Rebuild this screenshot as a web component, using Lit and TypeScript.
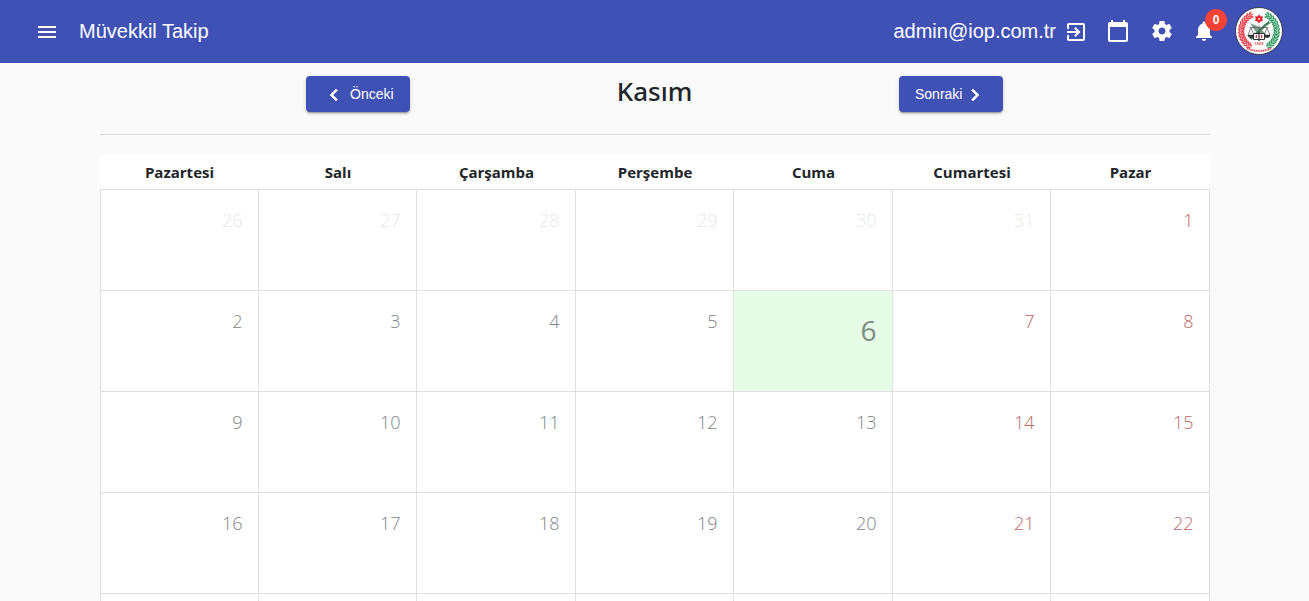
import { LitElement, html, css, svg } from "lit";
import { customElement } from "lit/decorators.js";
import { classMap } from "lit/directives/class-map.js";

const ICONS = {
  menu: "M3 18h18v-2H3v2zm0-5h18v-2H3v2zm0-7v2h18V6H3z",
  exit: "M10.09 15.59L11.5 17l5-5-5-5-1.41 1.41L12.67 11H3v2h9.67l-2.58 2.59zM19 3H5c-1.11 0-2 .9-2 2v4h2V5h14v14H5v-4H3v4c0 1.1.89 2 2 2h14c1.1 0 2-.9 2-2V5c0-1.1-.9-2-2-2z",
  calendar: "M20 3h-1V1h-2v2H7V1H5v2H4c-1.1 0-2 .9-2 2v16c0 1.1.9 2 2 2h16c1.1 0 2-.9 2-2V5c0-1.1-.9-2-2-2zm0 18H4V8h16v13z",
  settings: "M19.43 12.98c.04-.32.07-.64.07-.98s-.03-.66-.07-.98l2.11-1.65c.19-.15.24-.42.12-.64l-2-3.46c-.12-.22-.39-.3-.61-.22l-2.49 1c-.52-.4-1.08-.73-1.69-.98l-.38-2.65C14.46 2.18 14.25 2 14 2h-4c-.25 0-.46.18-.49.42l-.38 2.65c-.61.25-1.17.59-1.69.98l-2.49-1c-.23-.09-.49 0-.61.22l-2 3.46c-.13.22-.07.49.12.64l2.11 1.65c-.04.32-.07.65-.07.98s.03.66.07.98l-2.11 1.65c-.19.15-.24.42-.12.64l2 3.46c.12.22.39.3.61.22l2.49-1c.52.4 1.08.73 1.69.98l.38 2.65c.03.24.24.42.49.42h4c.25 0 .46-.18.49-.42l.38-2.65c.61-.25 1.17-.59 1.69-.98l2.49 1c.23.09.49 0 .61-.22l2-3.46c.12-.22.07-.49-.12-.64l-2.11-1.65zM12 15.5c-1.93 0-3.5-1.57-3.5-3.5s1.57-3.5 3.5-3.5 3.5 1.57 3.5 3.5-1.57 3.5-3.5 3.5z",
  bell: "M12 22c1.1 0 2-.9 2-2h-4c0 1.1.89 2 2 2zm6-6v-5c0-3.07-1.64-5.64-4.5-6.32V4c0-.83-.67-1.5-1.5-1.5s-1.5.67-1.5 1.5v.68C7.63 5.36 6 7.92 6 11v5l-2 2v1h16v-1l-2-2z",
  left: "M15.41 7.41L14 6l-6 6 6 6 1.41-1.41L10.83 12z",
  right: "M10 6L8.59 7.41 13.17 12l-4.58 4.59L10 18l6-6z",
};

const icon = (name: keyof typeof ICONS) =>
  html`<svg class="icon ${name}" viewBox="0 0 24 24"><path d=${ICONS[name]}></path></svg>`;

const DAYS = ["Pazartesi", "Salı", "Çarşamba", "Perşembe", "Cuma", "Cumartesi", "Pazar"];
const LEADING = [26, 27, 28, 29, 30, 31];

type Cell = { n: number | null; out: boolean };

/* Four numbered weeks, then the top edge of the next one below the fold. */
const CELLS: Cell[] = [
  ...LEADING.map((n) => ({ n, out: true })),
  ...Array.from({ length: 22 }, (_, i) => ({ n: i + 1, out: false })),
  ...Array.from({ length: 7 }, () => ({ n: null, out: false })),
];

/* One leaf cluster of the wreath, placed by its angle around the emblem. */
const leaf = (deg: number, color: string) => {
  const a = (deg * Math.PI) / 180;
  const x = 24 + 17.8 * Math.cos(a);
  const y = 24 + 17.8 * Math.sin(a);
  const s = Math.cos(a) > 0 ? -1 : 1;
  return svg`<g transform="translate(${x} ${y}) rotate(${deg + 90 * s})" fill=${color}>
    <ellipse cx="0" cy="-2.2" rx="2.4" ry="0.9" transform="rotate(-32)"></ellipse>
    <ellipse cx="0" cy="2.2" rx="2.4" ry="0.9" transform="rotate(32)"></ellipse>
    <ellipse cx="0" cy="0" rx="1.6" ry="0.7"></ellipse></g>`;
};
const RIGHT = [-66, -56, -46, -36, -26, -16, -6, 4, 14, 24, 34, 44, 54];

@customElement("bar-emblem")
class BarEmblem extends LitElement {
  static styles = css`
    :host { display: block; width: 48px; height: 48px; }
    svg { display: block; }
    text { font-family: "Liberation Sans", Arial, sans-serif; font-weight: bold; fill: #d9434e; }
  `;
  render() {
    return html`<svg width="48" height="48" viewBox="0 0 48 48">
      <circle cx="24" cy="24" r="23.5" fill="#fff" stroke="#30343f" stroke-width="0.9"></circle>
      ${RIGHT.map((d) => leaf(d, "#3c9d68"))}
      ${RIGHT.map((d) => leaf(180 - d, "#e8404c"))}
      <path d="M24 7.500l1.700 2 2.300-.2-.8 2.400.8 2.300-2.400.2L24 16.500l-1.600-2.300-2.400-.2.8-2.300-.8-2.400 2.300.2z" fill="#e3212b"></path>
      <circle cx="24" cy="12" r=".9" fill="#fff"></circle>
      <path d="M15 16l6 2.500 7 5.500 5 6-4-1-9-5z" fill="#7fa08e"></path>
      <path d="M34.500 15l-4.500 3.500-14.500 13.500" stroke="#47805f" stroke-width="2.600" fill="none"></path>
      <path d="M14.500 20.500h19M24 18v16M16 21l-3 7h6zM32 21l-3 7h6z" stroke="#4a5350" stroke-width=".7" fill="none"></path>
      <path d="M12.500 28h7q-.7 3-3.500 3t-3.500-3zM28.500 28h7q-.7 3-3.500 3t-3.500-3z" fill="#33383a"></path>
      <path d="M18.500 26.500h11v6h-11z" fill="#fff" stroke="#2f3334" stroke-width="1"></path>
      <path d="M24 25v9" stroke="#2f3334" stroke-width="1.200"></path>
      <path d="M21.300 28v3M26.700 28v3" stroke="#da3341" stroke-width="1.300"></path>
      <text x="24" y="37.500" font-size="4" text-anchor="middle">1909</text>
      <path d="M12 41.300Q24 46.500 36 41.300" stroke="#e05a63" stroke-width="2" stroke-dasharray="1.300 .5" fill="none"></path>
    </svg>`;
  }
}

@customElement("app-root")
class AppRoot extends LitElement {
  static styles = css`
    :host {
      display: block; height: 601px; overflow: hidden; background: #fafafa;
      font-family: "Liberation Sans", Arial, sans-serif; color: #212529;
    }
    .toolbar {
      box-sizing: border-box; height: 63px; padding: 0 26.5px 0 35px;
      display: flex; align-items: center; background: #3f51b5; color: #fff; font-size: 20px;
    }
    .icon { display: block; width: 24px; height: 24px; fill: currentColor; flex: none; }
    .toolbar .menu { margin: 1px 20px 0 0; }
    .brand, .user { line-height: 24px; white-space: nowrap; margin-top: -2px; }
    .spacer { flex: 1; }
    .user { margin-right: 8px; }
    .toolbar .exit { margin-top: 1px; }
    .toolbar .calendar { margin-left: 18px; }
    .toolbar .settings { margin-left: 20px; }
    .toolbar .calendar, .toolbar .settings, .alerts { margin-top: -1px; }
    .alerts { position: relative; margin-left: 18px; }
    .badge {
      position: absolute; left: 13px; top: -10px; width: 22px; height: 22px; border-radius: 50%;
      background: #f44336; font-size: 12px; font-weight: bold; line-height: 22px; text-align: center;
    }
    bar-emblem { margin-left: 18.5px; margin-top: -1px; }
    .page { width: 1110px; margin: 0 auto 0 100px; }
    .nav {
      box-sizing: border-box; height: 72px; padding-top: 13px; border-bottom: 1px solid #dcdcdc;
      display: grid; grid-template-columns: 516px 77px 516px; align-items: start;
    }
    .btn {
      display: flex; align-items: center; justify-self: center; box-sizing: border-box;
      width: 104px; height: 36px; padding: 0 16px; border: 0; border-radius: 4px;
      background: #3f51b5; color: #fff; font: 500 14px "Liberation Sans", Arial, sans-serif;
      box-shadow: 0 3px 1px -2px rgba(0,0,0,.2), 0 2px 2px rgba(0,0,0,.14), 0 1px 5px rgba(0,0,0,.12);
    }
    .btn .icon { margin-top: 2px; stroke: currentColor; stroke-width: .6; }
    .prev .icon { margin-right: 4px; }
    .next .icon { margin-left: 1px; }
    .month {
      margin: 0; font: 500 26px/30px "Noto Sans", "Open Sans", sans-serif;
      text-align: center; white-space: nowrap; height: 30px;
    }
    .days, .grid {
      display: grid; grid-template-columns: 159px 158px 159px 158px 159px 158px 159px;
      font-family: "Open Sans", "Noto Sans", sans-serif; background: #fff;
    }
    .days { margin-top: 20px; height: 34px; }
    .day { font-size: 15px; font-weight: 700; line-height: 35px; text-align: center; }
    .grid { border-top: 1px solid #e0e0e0; }
    .cell {
      box-sizing: border-box; height: 101px; padding: 15px 15.5px 0 0; text-align: right;
      border-right: 1px solid #e0e0e0; border-bottom: 1px solid #e0e0e0;
      font-size: 18px; font-weight: 300; line-height: 30px; color: #808488;
    }
    .first { border-left: 1px solid #e0e0e0; }
    .weekend { color: #bd6868; }
    .out { color: #e6e7e8; }
    .weekend.out { color: #f3e5e5; }
    .today { background: #e6fce6; font-size: 28px; font-weight: 400; line-height: 48px; color: #7d8c80; }
  `;

  render() {
    return html`
      <header class="toolbar">
        ${icon("menu")}<span class="brand">Müvekkil Takip</span>
        <span class="spacer"></span>
        <span class="user">admin@iop.com.tr</span>
        ${icon("exit")}${icon("calendar")}${icon("settings")}
        <div class="alerts">${icon("bell")}<span class="badge">0</span></div>
        <bar-emblem></bar-emblem>
      </header>
      <main class="page">
        <div class="nav">
          <button class="btn prev">${icon("left")}<span>Önceki</span></button>
          <h3 class="month">Kasım</h3>
          <button class="btn next"><span>Sonraki</span>${icon("right")}</button>
        </div>
        <div class="days">${DAYS.map((d) => html`<div class="day">${d}</div>`)}</div>
        <div class="grid">
          ${CELLS.map(
            (c, i) => html`<div class=${classMap({
              cell: true,
              first: i % 7 === 0,
              weekend: i % 7 > 4,
              out: c.out,
              today: !c.out && c.n === 6,
            })}>${c.n}</div>`,
          )}
        </div>
      </main>
    `;
  }
}
